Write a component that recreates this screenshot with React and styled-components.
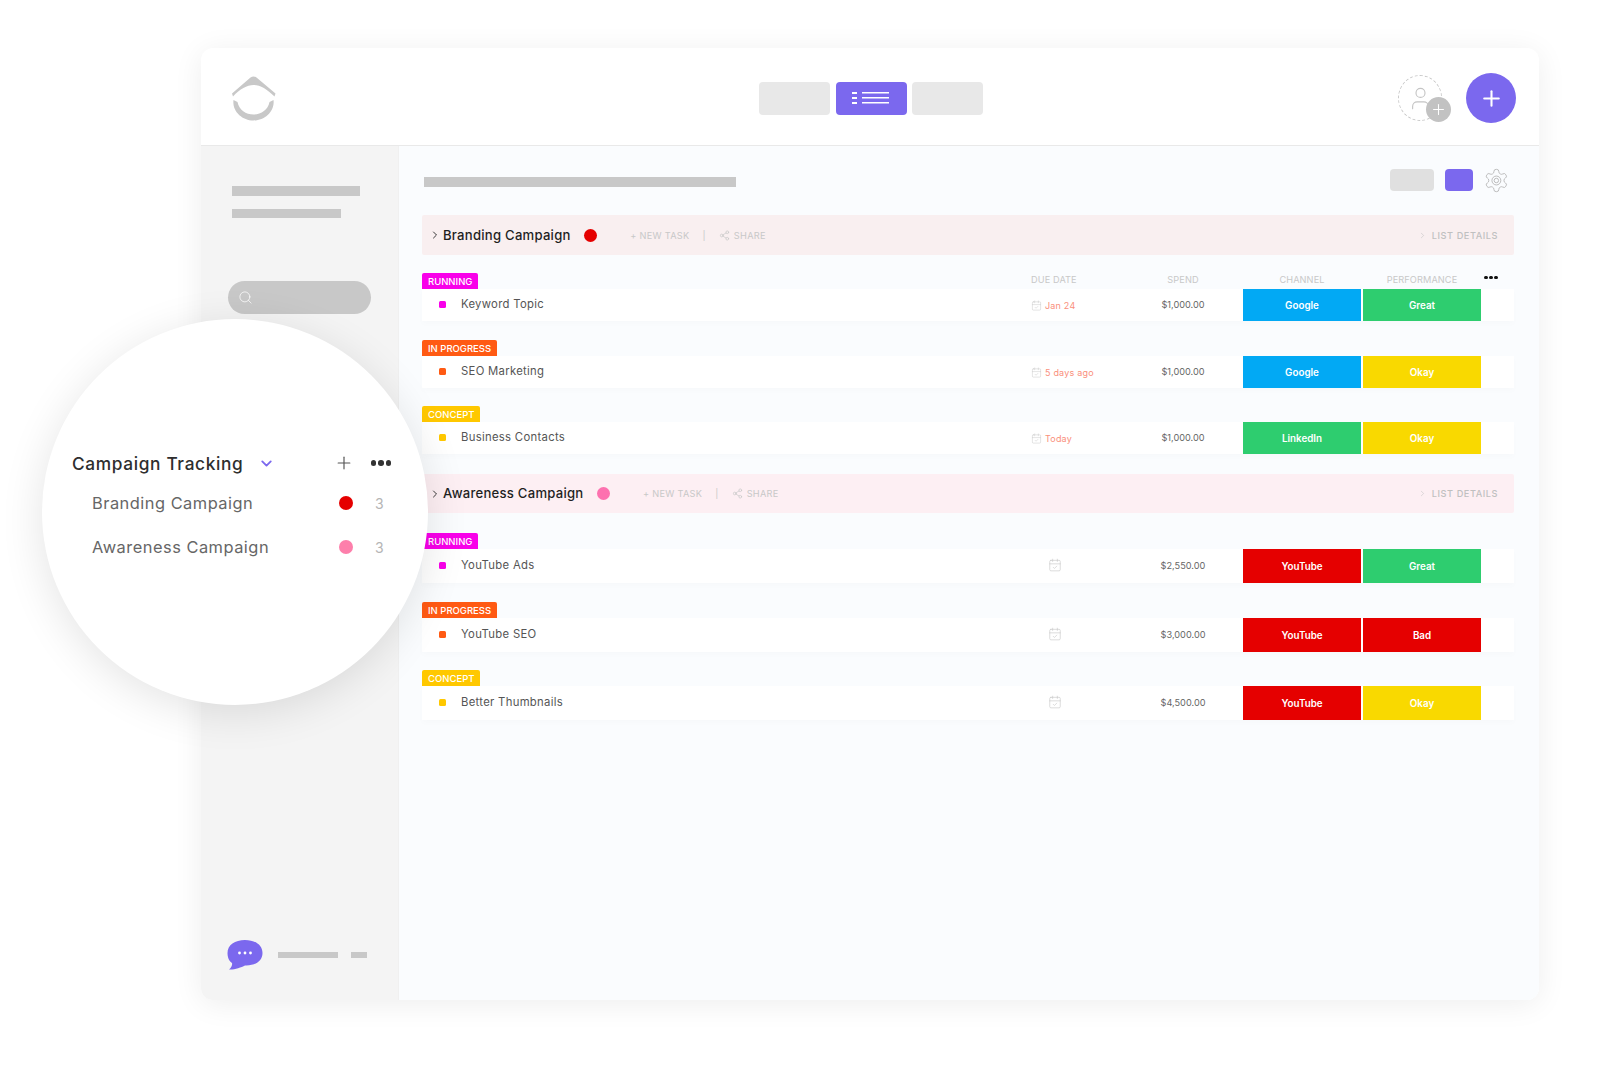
import React from "react";
import styled, { createGlobalStyle, css } from "styled-components";
import { Plus, ChevronRight, ChevronDown, CalendarCheck, Share2, User, Search } from "lucide-react";

const FONT = `"Inter", "Noto Sans", "Liberation Sans", sans-serif`;
const PURPLE = "#7b68ee";
const BAR = "#c8c8c8";

const Global = createGlobalStyle`
  html, body { margin: 0; padding: 0; background: #fff; }
  body { font-family: ${FONT}; width: 1600px; height: 1069px; overflow: hidden; }
`;

const Page = styled.div`
  position: relative;
  width: 1600px;
  height: 1069px;
  padding: 48px 61px 69px 201px;
  box-sizing: border-box;
`;
const Card = styled.div`
  height: 100%;
  display: flex;
  flex-direction: column;
  background: #fff;
  border-radius: 12px;
  overflow: hidden;
  box-shadow: 0 4px 30px rgba(0, 0, 0, 0.07);
`;
const Header = styled.header`
  flex: none;
  box-sizing: content-box;
  height: 94px;
  padding: 3px 23px 0 31px;
  display: grid;
  grid-template-columns: 527px auto 1fr;
  align-items: center;
  border-bottom: 1px solid #e9e9e9;
`;
const Logo = styled.svg`
  width: 44px;
  height: 45px;
  display: block;
`;
const Tabs = styled.div`
  display: flex;
  gap: 5.5px;
`;
const Tab = styled.div`
  width: 71px;
  height: 33px;
  border-radius: 4px;
  background: ${(p) => (p.$active ? PURPLE : "#e8e8e8")};
  display: flex;
  align-items: center;
  justify-content: center;
`;
const HeaderRight = styled.div`
  display: flex;
  justify-content: flex-end;
  align-items: center;
  gap: 24px;
`;
const Invite = styled.div`
  position: relative;
  width: 44px;
  height: 46px;
  border: 1px dashed #c9c9c9;
  border-radius: 50%;
  box-sizing: border-box;
  display: flex;
  align-items: center;
  justify-content: center;
  color: #c4c4c4;
`;
const InviteBadge = styled.span`
  position: absolute;
  right: -10px;
  bottom: -2px;
  width: 25px;
  height: 25px;
  border-radius: 50%;
  background: #c2c2c2;
  color: #fff;
  display: flex;
  align-items: center;
  justify-content: center;
`;
const AddButton = styled.div`
  width: 50px;
  height: 50px;
  border-radius: 50%;
  background: ${PURPLE};
  color: #fff;
  display: flex;
  align-items: center;
  justify-content: center;
`;
const Body = styled.div`
  flex: 1;
  display: flex;
  min-height: 0;
`;
const Sidebar = styled.aside`
  flex: none;
  background: #f4f4f4;
  border-right: 1px solid #f0f0f0;
  display: flex;
  flex-direction: column;
  padding: 40px 0 0 27px;
  width: 170px;
`;
const Bar = styled.div`
  height: ${(p) => p.$h || 10}px;
  width: ${(p) => p.$w}px;
  background: ${BAR};
  flex: none;
`;
const SideBars = styled.div`
  display: flex;
  flex-direction: column;
  gap: 13px;
  padding-left: 4px;
`;
const SearchPill = styled.div`
  width: 143px;
  height: 33px;
  margin-top: 63px;
  border-radius: 17px;
  background: ${BAR};
  color: #fff;
  display: flex;
  align-items: center;
  padding-left: 10px;
  box-sizing: border-box;
`;
const SideFoot = styled.div`
  margin-top: auto;
  margin-bottom: 30px;
  margin-left: -1px;
  display: flex;
  align-items: center;
`;
const Bubble = styled.svg`
  width: 36px;
  height: 30px;
  display: block;
  margin-right: 15px;
`;
const FootTail = styled(Bar)`
  margin-left: 13px;
`;
const Main = styled.main`
  flex: 1;
  min-width: 0;
  background: #fafcfe;
  padding: 23px 25px 0 23px;
`;
const Toolbar = styled.div`
  height: 22px;
  margin-bottom: 24px;
  padding: 0 4px 0 2px;
  display: flex;
  align-items: center;
`;
const TitleBar = styled(Bar)`
  margin-top: 4px;
`;
const ToolButton = styled.div`
  width: ${(p) => p.$w}px;
  height: 22px;
  border-radius: 4px;
  background: ${(p) => p.$bg};
  margin-left: ${(p) => p.$ml}px;
`;
const Gear = styled.svg`
  width: 27px;
  height: 27px;
  margin-left: 10px;
  display: block;
`;
const GroupHead = styled.div`
  height: ${(p) => p.$h}px;
  margin-top: ${(p) => p.$mt || 0}px;
  background: ${(p) => p.$bg};
  border-radius: 2px;
  display: flex;
  align-items: center;
  padding: 0 16px 0 7px;
  font-size: 13px;
  color: #222;
`;
const GroupName = styled.span`
  font-weight: 500;
  font-size: 13.1px;
  letter-spacing: 0.25px;
  margin: -1px 0 0 2px;
  color: #1f1f1f;
`;
const GroupDot = styled.span`
  width: 13px;
  height: 13px;
  border-radius: 50%;
  background: ${(p) => p.$c};
  margin-left: 13.5px;
`;
const Faint = styled.span`
  font-size: 9.2px;
  letter-spacing: 0.3px;
  color: #c8c8c8;
  display: inline-flex;
  align-items: center;
  gap: 4px;
`;
const NewTask = styled(Faint)`
  margin-left: 33px;
`;
const Pipe = styled(Faint)`
  margin: 0 13px;
`;
const ListDetails = styled(Faint)`
  margin-left: auto;
  letter-spacing: 0.55px;
  gap: 5px;
  color: #c0c0c0;
  font-weight: 500;
`;
const grid = css`
  display: grid;
  grid-template-columns: 609px 92px 120px 118px 2px 118px 33px;
  align-items: center;
`;
const Task = styled.section`
  margin-top: ${(p) => p.$mt}px;
`;
const TagRow = styled.div`
  ${grid}
  height: 16px;
`;
const Tag = styled.span`
  justify-self: start;
  height: 16px;
  display: flex;
  align-items: center;
  padding: 0 6px;
  border-radius: 2px 2px 0 0;
  background: ${(p) => p.$c};
  color: #fff;
  font-size: 9.5px;
  font-weight: 500;
`;
const ColLabel = styled.span`
  font-size: 9.2px;
  letter-spacing: 0.1px;
  color: #c8c8c8;
  margin-top: -4px;
  text-align: ${(p) => (p.$left ? "left" : "center")};
  grid-column: ${(p) => p.$col};
`;
const Dots = styled.span`
  grid-column: 7;
  display: flex;
  gap: 1.5px;
  padding-left: 3px;
  margin-top: -7px;
  & > i {
    width: 3.5px;
    height: 3.5px;
    border-radius: 50%;
    background: #111;
  }
`;
const Row = styled.div`
  ${grid}
  height: ${(p) => p.$h}px;
  background: #fff;
  box-shadow: 0 3px 6px rgba(0, 0, 0, 0.015);
`;
const NameCell = styled.div`
  display: flex;
  align-items: center;
  padding: 0 0 2px 17px;
  font-size: 11.3px;
  letter-spacing: 0.3px;
  color: #555;
`;
const Bullet = styled.span`
  width: 7px;
  height: 7px;
  border-radius: 1.5px;
  background: ${(p) => p.$c};
  margin-right: 15px;
`;
const DueCell = styled.div`
  display: flex;
  align-items: center;
  gap: 3px;
  font-size: 9px;
  letter-spacing: 0.2px;
  color: #fa8f7c;
  padding: 0 0 ${(p) => (p.$pad ? 3 : 0)}px ${(p) => p.$pad || 0}px;
  & svg {
    color: #c4c4c4;
  }
`;
const Spend = styled.div`
  grid-column: 3;
  padding-bottom: 2px;
  text-align: center;
  font-size: 9.2px;
  color: #666;
`;
const ColorCell = styled.div`
  grid-column: ${(p) => p.$col};
  height: 100%;
  box-sizing: border-box;
  background: ${(p) => p.$c};
  color: #fff;
  font-size: 9.8px;
  font-weight: 600;
  display: flex;
  align-items: center;
  justify-content: center;
`;
const Lens = styled.div`
  position: absolute;
  left: 42px;
  top: 319px;
  width: 386px;
  height: 386px;
  border-radius: 50%;
  background: #fff;
  box-shadow: 0 8px 44px rgba(0, 0, 0, 0.11);
  padding: 133px 37px 0 30px;
  box-sizing: border-box;
  display: flex;
  flex-direction: column;
`;
const LensHead = styled.div`
  display: flex;
  align-items: center;
  height: 22px;
  color: #333;
`;
const LensTitle = styled.span`
  font-size: 17.3px;
  font-weight: 500;
  letter-spacing: 0.65px;
  color: #2e2e2e;
`;
const LensChevron = styled.span`
  margin-left: 15px;
  color: ${PURPLE};
  display: flex;
`;
const LensPlus = styled.span`
  margin-left: auto;
  display: flex;
  color: #555;
`;
const LensDots = styled(Dots)`
  margin: 0 0 0 17px;
  padding: 0;
  gap: 2px;
  & > i {
    width: 5.5px;
    height: 5.5px;
    background: #333;
  }
`;
const LensItem = styled.div`
  display: flex;
  align-items: center;
  height: 44px;
  padding-left: 20px;
  margin-right: -4px;
  font-size: 16.4px;
  letter-spacing: 0.5px;
  color: #666;
  &:nth-child(2) {
    margin-top: 7px;
  }
`;
const LensDot = styled.span`
  width: 14px;
  height: 14px;
  border-radius: 50%;
  background: ${(p) => p.$c};
  margin-left: auto;
`;
const LensCount = styled.span`
  width: 20px;
  margin-left: 22px;
  font-size: 14px;
  color: #b5b5b5;
`;
const ListLines = styled.svg`
  width: 38px;
  height: 14px;
  display: block;
`;

const STATUS = {
  running: { label: "RUNNING", color: "#f900ea" },
  progress: { label: "IN PROGRESS", color: "#ff5a13" },
  concept: { label: "CONCEPT", color: "#ffc800" },
};
const COLORS = {
  Google: "#02a9f4",
  LinkedIn: "#2ecd6f",
  YouTube: "#e50000",
  Great: "#2ecd6f",
  Okay: "#f9d900",
  Bad: "#e50000",
};

const groups = [
  {
    name: "Branding Campaign",
    dot: "#e50000",
    bg: "#f9eff0",
    h: 40,
    mt: 0,
    rowH: 32,
    tasks: [
      { s: "running", name: "Keyword Topic", due: "Jan 24", spend: "$1,000.00", ch: "Google", perf: "Great", mt: 18, labels: true },
      { s: "progress", name: "SEO Marketing", due: "5 days ago", spend: "$1,000.00", ch: "Google", perf: "Okay", mt: 19 },
      { s: "concept", name: "Business Contacts", due: "Today", spend: "$1,000.00", ch: "LinkedIn", perf: "Okay", mt: 18 },
    ],
  },
  {
    name: "Awareness Campaign",
    dot: "#fd71af",
    bg: "#fdeff3",
    h: 39,
    mt: 20,
    rowH: 34,
    tasks: [
      { s: "running", name: "YouTube Ads", spend: "$2,550.00", ch: "YouTube", perf: "Great", mt: 20 },
      { s: "progress", name: "YouTube SEO", spend: "$3,000.00", ch: "YouTube", perf: "Bad", mt: 19 },
      { s: "concept", name: "Better Thumbnails", spend: "$4,500.00", ch: "YouTube", perf: "Okay", mt: 18 },
    ],
  },
];

const GEAR =
  "M12.22 2h-.44a2 2 0 0 0-2 2v.18a2 2 0 0 1-1 1.73l-.43.25a2 2 0 0 1-2 0l-.15-.08a2 2 0 0 0-2.73.73l-.22.38a2 2 0 0 0 .73 2.73l.15.1a2 2 0 0 1 1 1.72v.51a2 2 0 0 1-1 1.74l-.15.09a2 2 0 0 0-.73 2.73l.22.38a2 2 0 0 0 2.73.73l.15-.08a2 2 0 0 1 2 0l.43.25a2 2 0 0 1 1 1.73V20a2 2 0 0 0 2 2h.44a2 2 0 0 0 2-2v-.18a2 2 0 0 1 1-1.73l.43-.25a2 2 0 0 1 2 0l.15.08a2 2 0 0 0 2.73-.73l.22-.39a2 2 0 0 0-.73-2.73l-.15-.08a2 2 0 0 1-1-1.74v-.5a2 2 0 0 1 1-1.74l.15-.09a2 2 0 0 0 .73-2.73l-.22-.38a2 2 0 0 0-2.73-.73l-.15.08a2 2 0 0 1-2 0l-.43-.25a2 2 0 0 1-1-1.73V4a2 2 0 0 0-2-2z";

const ThreeDots = ({ as: C = Dots }) => (
  <C>
    <i />
    <i />
    <i />
  </C>
);

function TaskBlock({ t, rowH }) {
  const st = STATUS[t.s];
  return (
    <Task $mt={t.mt}>
      <TagRow>
        <Tag $c={st.color}>{st.label}</Tag>
        {t.labels && (
          <>
            <ColLabel $col={2} $left>DUE DATE</ColLabel>
            <ColLabel $col={3}>SPEND</ColLabel>
            <ColLabel $col={4}>CHANNEL</ColLabel>
            <ColLabel $col={6}>PERFORMANCE</ColLabel>
            <ThreeDots />
          </>
        )}
      </TagRow>
      <Row $h={rowH}>
        <NameCell>
          <Bullet $c={st.color} />
          {t.name}
        </NameCell>
        {t.due ? (
          <DueCell>
            <CalendarCheck size={11} strokeWidth={1} />
            {t.due}
          </DueCell>
        ) : (
          <DueCell $pad={17}>
            <CalendarCheck size={14} strokeWidth={1} />
          </DueCell>
        )}
        <Spend>{t.spend}</Spend>
        <ColorCell $col={4} $c={COLORS[t.ch]}>{t.ch}</ColorCell>
        <ColorCell $col={6} $c={COLORS[t.perf]}>{t.perf}</ColorCell>
      </Row>
    </Task>
  );
}

export default function App() {
  return (
    <Page>
      <Global />
      <Card>
        <Header>
          <Logo viewBox="0 0 44 45">
            <path d="M0 17.5 L18.5 1.5 Q21.5 -0.5 24.5 1.5 L43.5 17.5 L42.5 20.5 C35 13 28 9 21.5 9 C15 9 8 13 1 20.5 Z" fill={BAR} />
            <path d="M1.5 24 L5.5 26 C7 34 14 38.5 21.5 38.5 C29 38.5 36 34 37.5 26 L41.5 24 C43 35 33 44.5 21.5 44.5 C10 44.5 0 35 1.5 24 Z" fill={BAR} />
          </Logo>
          <Tabs>
            <Tab />
            <Tab $active>
              <ListLines viewBox="0 0 38 14" fill="#fff">
                <rect x="0" y="1" width="5" height="2" />
                <rect x="0" y="6" width="5" height="2" />
                <rect x="0" y="11" width="5" height="2" />
                <rect x="10" y="1" width="27" height="1.5" />
                <rect x="10" y="6" width="27" height="1.5" />
                <rect x="10" y="11" width="27" height="1.5" />
              </ListLines>
            </Tab>
            <Tab />
          </Tabs>
          <HeaderRight>
            <Invite>
              <User size={27} strokeWidth={1} />
              <InviteBadge>
                <Plus size={17} strokeWidth={1.5} />
              </InviteBadge>
            </Invite>
            <AddButton>
              <Plus size={25} strokeWidth={2} />
            </AddButton>
          </HeaderRight>
        </Header>
        <Body>
          <Sidebar>
            <SideBars>
              <Bar $w={128} />
              <Bar $w={109} $h={9} />
            </SideBars>
            <SearchPill>
              <Search size={15} strokeWidth={1.2} />
            </SearchPill>
            <SideFoot>
              <Bubble viewBox="0 0 36 30">
                <path d="M18 0 C28 0 35.5 5 35.5 13 C35.5 21 28 26 18 25.5 C14 27.5 7 30 2 29.5 C4.5 27.5 5.5 25 5 23 C1.5 20.5 0.5 16.5 0.5 13 C0.5 5 8 0 18 0 Z" fill={PURPLE} />
                <circle cx="12.5" cy="13" r="1.4" fill="#fff" />
                <circle cx="18" cy="13" r="1.4" fill="#fff" />
                <circle cx="23.5" cy="13" r="1.4" fill="#fff" />
              </Bubble>
              <Bar $w={60} $h={6} />
              <FootTail $w={16} $h={6} />
            </SideFoot>
          </Sidebar>
          <Main>
            <Toolbar>
              <TitleBar $w={312} />
              <ToolButton $w={44} $bg="#e0e0e0" $ml={654} />
              <ToolButton $w={29} $bg={PURPLE} $ml={11} />
              <Gear viewBox="0 0 24 24" fill="none" stroke="#b5b5b5" strokeWidth="0.8">
                <path d={GEAR} />
                <circle cx="12" cy="12" r="4" />
                <circle cx="12" cy="12" r="2" />
              </Gear>
            </Toolbar>
            {groups.map((g) => (
              <React.Fragment key={g.name}>
                <GroupHead $h={g.h} $mt={g.mt} $bg={g.bg}>
                  <ChevronRight size={12} strokeWidth={1.8} />
                  <GroupName>{g.name}</GroupName>
                  <GroupDot $c={g.dot} />
                  <NewTask>+ NEW TASK</NewTask>
                  <Pipe>|</Pipe>
                  <Faint>
                    <Share2 size={11} strokeWidth={1.5} />
                    SHARE
                  </Faint>
                  <ListDetails>
                    <ChevronRight size={9} strokeWidth={1.4} />
                    LIST DETAILS
                  </ListDetails>
                </GroupHead>
                {g.tasks.map((t) => (
                  <TaskBlock key={t.name} t={t} rowH={g.rowH} />
                ))}
              </React.Fragment>
            ))}
          </Main>
        </Body>
      </Card>
      <Lens>
        <LensHead>
          <LensTitle>Campaign Tracking</LensTitle>
          <LensChevron>
            <ChevronDown size={17} strokeWidth={2.6} />
          </LensChevron>
          <LensPlus>
            <Plus size={20} strokeWidth={1.4} />
          </LensPlus>
          <ThreeDots as={LensDots} />
        </LensHead>
        <LensItem>
          Branding Campaign
          <LensDot $c="#e50000" />
          <LensCount>3</LensCount>
        </LensItem>
        <LensItem>
          Awareness Campaign
          <LensDot $c="#fd7fab" />
          <LensCount>3</LensCount>
        </LensItem>
      </Lens>
    </Page>
  );
}
